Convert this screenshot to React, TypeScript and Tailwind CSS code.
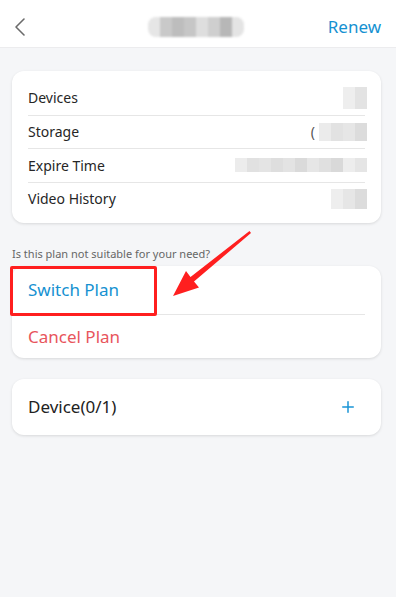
import { Plus } from "lucide-react"

const font = { fontFamily: '"Noto Sans", "Open Sans", sans-serif' }

function Blur({ shades, h = 20 }: { shades: string[]; h?: number }) {
  return (
    <div className="flex blur-[0.6px]" style={{ height: h }}>
      {shades.map((c, i) => (
        <div key={i} className="w-[12px] h-full" style={{ background: c }} />
      ))}
    </div>
  )
}

const rows: { label: string; value: React.ReactNode }[] = [
  { label: "Devices", value: <Blur shades={["#eeeeee", "#e3e3e3"]} h={22} /> },
  {
    label: "Storage",
    value: (
      <div className="flex items-center gap-[4px]">
        <span className="text-[14px] text-[#555]">(</span>
        <Blur shades={["#ebebeb", "#e2e2e2", "#e6e6e6", "#dcdcdc"]} h={18} />
      </div>
    ),
  },
  {
    label: "Expire Time",
    value: (
      <Blur
        shades={["#ececec", "#e1e1e1", "#e4e4e4", "#dedede", "#e3e3e3", "#dadada", "#e6e6e6", "#e0e0e0", "#d9d9d9", "#ededed", "#e5e5e5"]}
        h={14}
      />
    ),
  },
  { label: "Video History", value: <Blur shades={["#eeeeee", "#e6e6e6", "#dcdcdc"]} h={20} /> },
]

export default function App() {
  return (
    <div className="relative min-h-[597px] bg-[#f5f6f8]" style={font}>
      <header className="h-12 bg-white border-b border-[#ececee] flex items-center justify-between pt-[6px] pl-[13px] pr-[15px]">
        <svg width="14" height="20" viewBox="0 0 14 20" fill="none">
          <path d="M11 2 L3 10 L11 18" stroke="#6b6b6b" strokeWidth="1.6" strokeLinecap="round" strokeLinejoin="round" />
        </svg>
        <div className="ml-[121px] blur-[0.8px] flex h-[20px] rounded-[8px] overflow-hidden">
          {["#e6e6e6", "#c9c9c9", "#bdbdbd", "#c6c6c6", "#dedede", "#cfcfcf", "#b7b7b7", "#e4e4e4"].map((c, i) => (
            <div key={i} className="w-[12px] h-full" style={{ background: c }} />
          ))}
        </div>
        <span className="ml-auto text-[17px] text-[#1591d1]">Renew</span>
      </header>

      <div className="mt-[23px] ml-3 mr-[15px] bg-white rounded-[12px] shadow-[0_1px_3px_rgba(0,0,0,0.12)] px-4 pt-[10px] pb-[8px]">
        {rows.map((r, i) => (
          <div key={r.label} className={`h-[33.5px] flex items-center justify-between ${i > 0 ? "border-t border-[#e6e6e6]" : ""}`}>
            <span className="text-[14px] text-[#262626]">{r.label}</span>
            <div className="-mr-[2px]">{r.value}</div>
          </div>
        ))}
      </div>

      <p className="mt-[24px] mb-[6px] px-3 text-[11px] leading-[13px] text-[#666]">Is this plan not suitable for your need?</p>

      <div className="ml-3 mr-[15px] bg-white rounded-[12px] shadow-[0_1px_3px_rgba(0,0,0,0.12)]">
        <div className="h-12 px-4 flex items-center text-[17px] text-[#1591d1]">Switch Plan</div>
        <div className="mx-4 border-t border-[#e6e6e6]" />
        <div className="h-[43px] px-4 flex items-center text-[17px] text-[#e8555c]">Cancel Plan</div>
      </div>

      <div className="mt-[21px] ml-3 mr-[15px] h-14 bg-white rounded-[12px] shadow-[0_1px_3px_rgba(0,0,0,0.12)] px-4 flex items-center justify-between">
        <span className="text-[17px] text-[#222]">Device(0/1)</span>
        <Plus size={18} strokeWidth={2} className="text-[#1a95d6] mr-[8px]" />
      </div>

      {/* annotation overlay */}
      <div className="absolute left-[10px] top-[266px] w-[147px] h-[50px] border-[3px] border-[#ff1f1f] rounded-[2px]" />
      <svg className="absolute left-0 top-0 pointer-events-none" width="396" height="597">
        <polygon
          points="173,296 186,271 190.5,277 249.5,231 251,233 194,281.5 199,287.5"
          fill="#ff1f1f"
        />
      </svg>
    </div>
  )
}
